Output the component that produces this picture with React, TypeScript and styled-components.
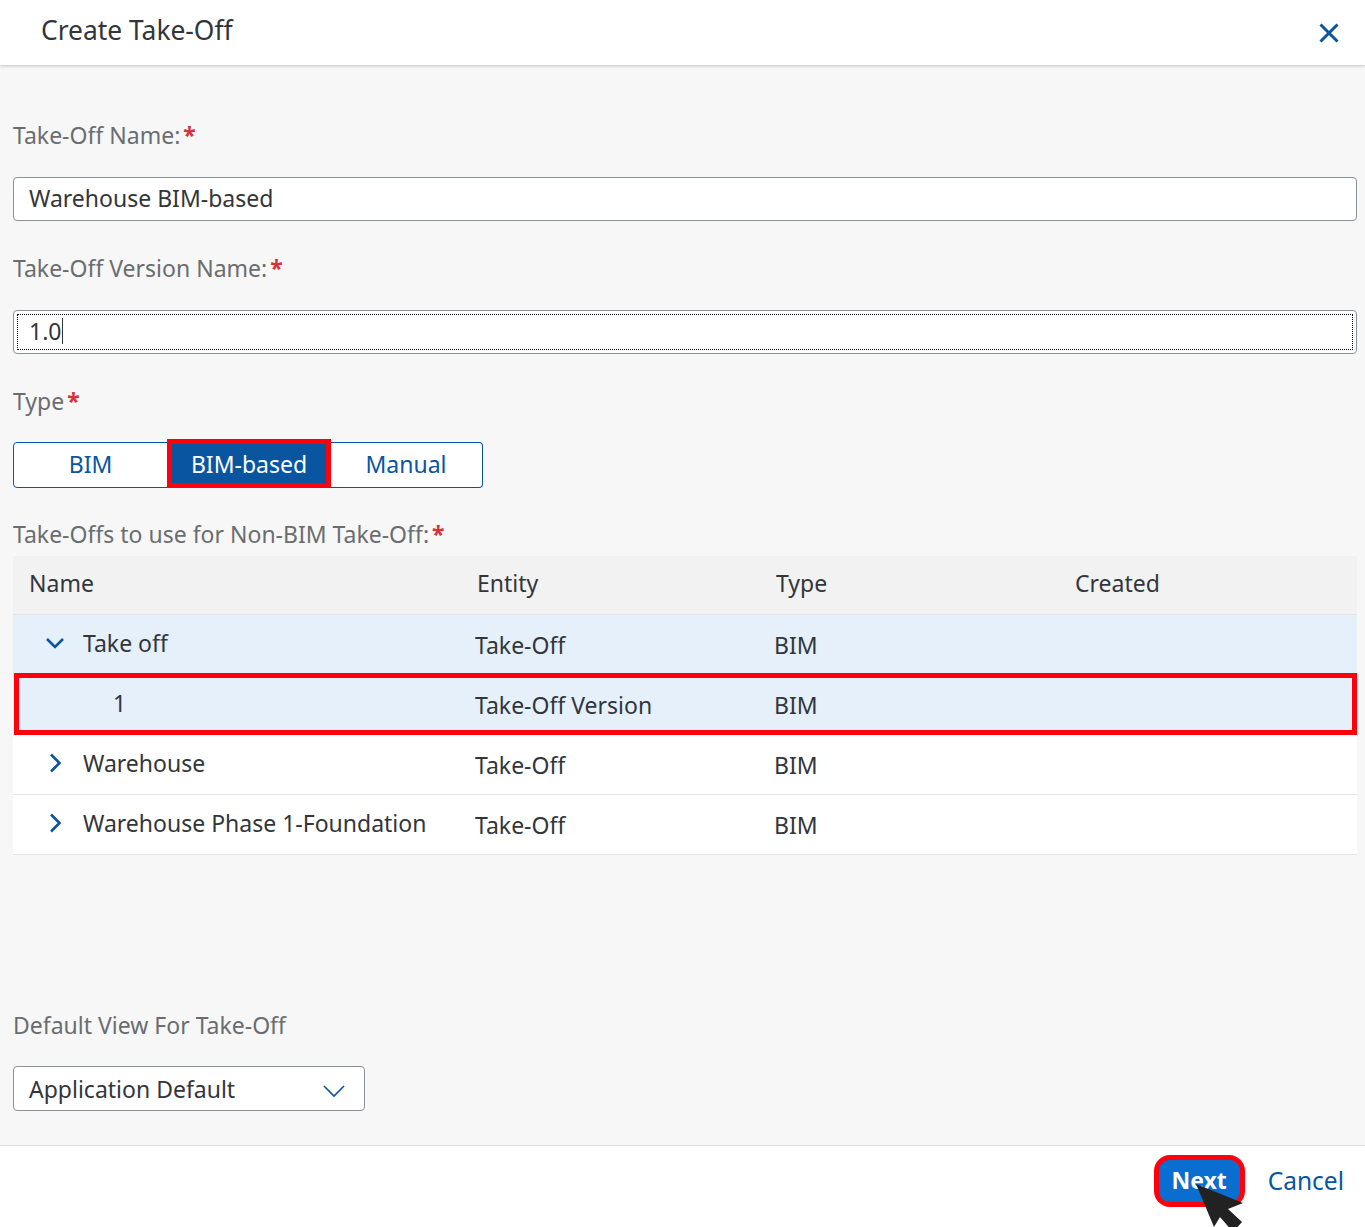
import * as React from 'react';
import styled, { createGlobalStyle } from 'styled-components';

const GlobalStyle = createGlobalStyle`
  html, body {
    margin: 0;
    padding: 0;
    background: #f7f7f7;
  }
  body {
    font-family: "Noto Sans", "Open Sans", Arial, sans-serif;
    color: #32363a;
  }
  * {
    box-sizing: border-box;
  }
`;

const Dialog = styled.div`
  width: 1365px;
  height: 1227px;
  display: flex;
  flex-direction: column;
  overflow: hidden;
  background: #f7f7f7;
`;

const Header = styled.header`
  height: 65px;
  flex: 0 0 auto;
  background: #fff;
  box-shadow: 0 1px 3px rgba(0, 0, 0, .22);
  display: flex;
  align-items: center;
  justify-content: space-between;
  padding: 0 24px 5px 41px;
  position: relative;
`;

const Title = styled.h1`
  margin: 0;
  font-size: 26.4px;
  font-weight: 400;
  line-height: 34px;
`;

const IconButton = styled.button`
  border: 0;
  background: none;
  padding: 0;
  width: 24px;
  height: 24px;
  margin-top: 5px;
  color: #0a55a0;
  display: flex;
`;

const Body = styled.main`
  flex: 1 1 auto;
  padding: 54px 8px 0 13px;
`;

const Label = styled.label<{ $gap?: number }>`
  display: flex;
  height: 32px;
  align-items: center;
  font-size: 23px;
  color: #6a6d70;
  margin-bottom: ${p => p.$gap ?? 26}px;
`;

const Required = styled.span`
  color: #d3343a;
  font-weight: 700;
  margin-left: 3px;
`;

const Input = styled.div<{ $focused?: boolean }>`
  height: 44px;
  border: 1px solid #89919a;
  border-radius: 4px;
  background: #fff;
  font-size: 23px;
  display: flex;
  align-items: center;
  padding: 0 15px 2px;
  margin-bottom: 31px;
  position: relative;

  ${p => p.$focused && `
    &::after {
      content: "";
      position: absolute;
      inset: 3px;
      border: 1px dotted #000;
    }
  `}
`;

const Caret = styled.span`
  display: inline-block;
  width: 1px;
  height: 26px;
  margin-left: 1px;
  background: #32363a;
`;

const Segmented = styled.div`
  width: 470px;
  height: 45px;
  display: grid;
  grid-template-columns: 155px 162px 153px;
  margin-bottom: 31px;
`;

const Segment = styled.button<{ $pos: 'first' | 'middle' | 'last' }>`
  border: 1px solid #0a55a0;
  border-left-width: ${p => (p.$pos === 'first' ? 1 : 0)}px;
  background: #fff;
  color: #0a55a0;
  font: inherit;
  font-size: 23px;
  padding: 0 0 2px;
  border-radius: ${p =>
    p.$pos === 'first' ? '4px 0 0 4px' : p.$pos === 'last' ? '0 4px 4px 0' : '0'};
`;

const ActiveSegment = styled.button`
  background: #0a55a0;
  color: #fff;
  font: inherit;
  font-size: 23px;
  padding: 0;
  margin-left: -1px;
  width: 164px;
  height: 49px;
  margin-top: -3px;
  border: 5px solid #ff000d;
  position: relative;
  z-index: 1;
`;

const Table = styled.div`
  display: flex;
  flex-direction: column;
  margin-bottom: 154px;
`;

const Row = styled.div<{ $selected?: boolean; $marked?: boolean }>`
  display: grid;
  grid-template-columns: 448px 299px 299px 298px;
  height: 60px;
  align-items: center;
  font-size: 23px;
  background: ${p => (p.$selected ? '#e5f0fa' : '#fff')};
  border-bottom: 1px solid ${p => (p.$selected ? '#e5f0fa' : '#e5e5e5')};
  position: relative;

  ${p => p.$marked && `
    &::after {
      content: "";
      position: absolute;
      left: 1px;
      right: 0;
      top: -2px;
      bottom: -1px;
      border: 5px solid #ff000d;
    }
  `}
`;

const HeadRow = styled(Row)`
  height: 59px;
  background: #f2f2f2;
  border-bottom: 1px solid #e5e5e5;
`;

const HeadCell = styled.div`
  padding: 0 0 4px 16px;
`;

const NameCell = styled.div<{ $indent?: boolean }>`
  display: flex;
  align-items: center;
  padding-left: ${p => (p.$indent ? 100 : 30)}px;
  padding-bottom: 3px;
`;

const Cell = styled.div`
  padding-left: 14px;
`;

const Toggle = styled.span`
  width: 24px;
  height: 24px;
  color: #0a55a0;
  margin-right: 16px;
  display: flex;
`;

const Footer = styled.footer`
  height: 82px;
  flex: 0 0 auto;
  background: #fff;
  border-top: 1px solid #dcdcdc;
  display: flex;
  align-items: center;
  justify-content: flex-end;
  padding: 0 21px 11px 0;
`;

const NextButton = styled.button`
  width: 91px;
  height: 52px;
  border: 5px solid #ff000d;
  border-radius: 16px;
  background: #0a6ed1;
  color: #fff;
  font: inherit;
  font-size: 23px;
  font-weight: 700;
  padding: 0 0 2px;
  margin-right: 23px;
  position: relative;
`;

const CursorIcon = styled.svg`
  position: absolute;
  left: 37px;
  top: 24px;
  width: 50px;
  height: 50px;
`;

const CancelButton = styled.button`
  border: 0;
  background: none;
  color: #0a55a0;
  font: inherit;
  font-size: 24.5px;
  padding: 0;
  margin-bottom: 2px;
`;

const Select = styled(Input)`
  width: 352px;
  height: 45px;
  justify-content: space-between;
  padding: 0 18px 0 15px;
  margin-bottom: 0;
`;

const SelectArrow = styled.svg`
  width: 24px;
  height: 24px;
  color: #0a55a0;
  margin-top: 4px;
`;

const Chevron = ({ open }: { open?: boolean }) => (
  <svg viewBox="0 0 24 24" width="24" height="24" fill="none" stroke="currentColor" strokeWidth="2.6">
    <path d={open ? 'M4 8l8 8 8-8' : 'M8 3.5l8.5 8.5L8 20.5'} />
  </svg>
);

const rows = [
  { name: 'Take off', entity: 'Take-Off', open: true, selected: true },
  { name: '1', entity: 'Take-Off Version', child: true, selected: true, marked: true },
  { name: 'Warehouse', entity: 'Take-Off' },
  { name: 'Warehouse Phase 1-Foundation', entity: 'Take-Off' },
];

const App = () => (
  <Dialog>
    <GlobalStyle />
    <Header>
      <Title>Create Take-Off</Title>
      <IconButton aria-label="Close">
        <svg viewBox="0 0 24 24" width="24" height="24" fill="none" stroke="currentColor" strokeWidth="3">
          <path d="M3.5 3.5l17 17M20.5 3.5l-17 17" />
        </svg>
      </IconButton>
    </Header>
    <Body>
      <Label>Take-Off Name:<Required>*</Required></Label>
      <Input>Warehouse BIM-based</Input>
      <Label>Take-Off Version Name:<Required>*</Required></Label>
      <Input $focused>1.0<Caret /></Input>
      <Label $gap={25}>Type<Required>*</Required></Label>
      <Segmented>
        <Segment $pos="first">BIM</Segment>
        <ActiveSegment>BIM-based</ActiveSegment>
        <Segment $pos="last">Manual</Segment>
      </Segmented>
      <Label $gap={6}>Take-Offs to use for Non-BIM Take-Off:<Required>*</Required></Label>
      <Table>
        <HeadRow>
          <HeadCell>Name</HeadCell>
          <HeadCell>Entity</HeadCell>
          <HeadCell>Type</HeadCell>
          <HeadCell>Created</HeadCell>
        </HeadRow>
        {rows.map(row => (
          <Row key={row.name} $selected={row.selected} $marked={row.marked}>
            <NameCell $indent={row.child}>
              {!row.child && (
                <Toggle><Chevron open={row.open} /></Toggle>
              )}
              {row.name}
            </NameCell>
            <Cell>{row.entity}</Cell>
            <Cell>BIM</Cell>
            <Cell />
          </Row>
        ))}
      </Table>
      <Label $gap={25}>Default View For Take-Off</Label>
      <Select>
        Application Default
        <SelectArrow viewBox="0 0 24 24" fill="none" stroke="currentColor" strokeWidth="1.6">
          <path d="M2 7l10 10L22 7" />
        </SelectArrow>
      </Select>
    </Body>
    <Footer>
      <NextButton>
        Next
        <CursorIcon viewBox="0 0 50 50">
          <path d="M0 0L47 19L32 25L46 38L37 48L24 33L18 43Z" fill="#222" />
        </CursorIcon>
      </NextButton>
      <CancelButton>Cancel</CancelButton>
    </Footer>
  </Dialog>
);

export default App;
